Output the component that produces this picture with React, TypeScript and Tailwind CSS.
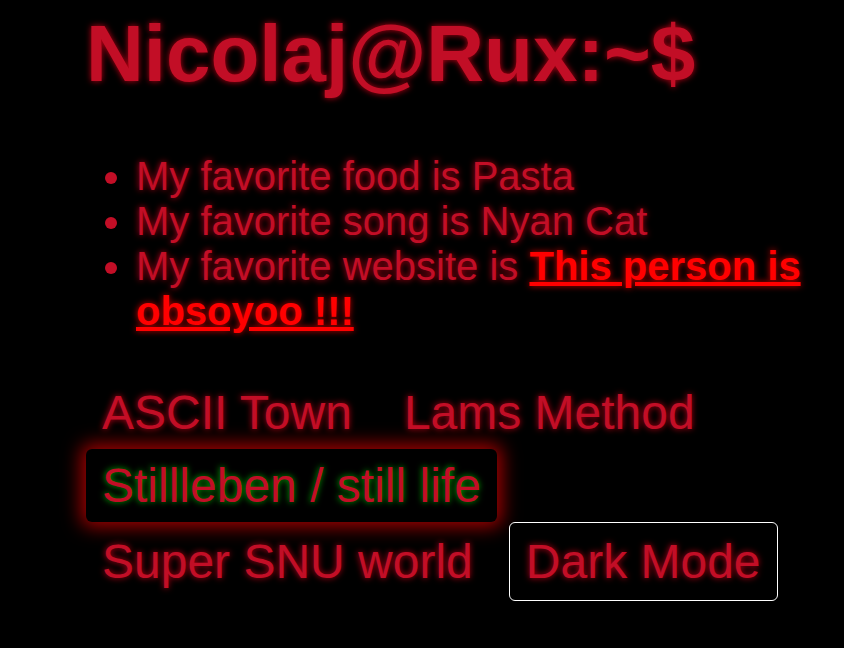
import React from "react";

const glow = "[text-shadow:0_0_6px_rgba(255,0,30,0.75)]";

export default function App() {
  return (
    <div className="min-h-[648px] w-full bg-black pl-[86px] pt-[8px] font-['Liberation_Sans',Arial,sans-serif] text-[#c20e26]">
      <h1 className={`m-0 text-[80px] font-bold leading-[92px] ${glow}`}>Nicolaj@Rux:~$</h1>
      <ul className={`mt-[54px] list-disc pl-[50px] text-[40px] leading-[45px] ${glow}`}>
        <li>My favorite food is Pasta</li>
        <li>My favorite song is Nyan Cat</li>
        <li>
          My favorite website is{" "}
          <a href="#" className="font-bold text-[#ff0000] underline [text-shadow:0_0_6px_rgba(255,0,0,0.8)]">
            This person is obsoyoo !!!
          </a>
        </li>
      </ul>
      <nav className="mt-[42px] flex max-w-[700px] flex-wrap items-center gap-x-[20px] gap-y-0 text-[48px]">
        <a className={`px-4 py-[9px] leading-[55px] ${glow}`}>ASCII Town</a>
        <a className={`px-4 py-[9px] leading-[55px] ${glow}`}>Lams Method</a>
        <a className="rounded-[6px] bg-black px-4 py-[9px] leading-[55px] shadow-[0_0_18px_5px_rgba(230,0,0,0.7)] [text-shadow:0_0_6px_rgba(0,200,0,0.9)]">
          Stillleben / still life
        </a>
        <div className="basis-full h-0" />
        <a className={`px-4 py-[9px] leading-[55px] ${glow}`}>Super SNU world</a>
        <button className={`rounded-[6px] border border-white bg-black px-4 py-[11px] leading-[55px] ${glow}`}>Dark Mode</button>
      </nav>
    </div>
  );
}
